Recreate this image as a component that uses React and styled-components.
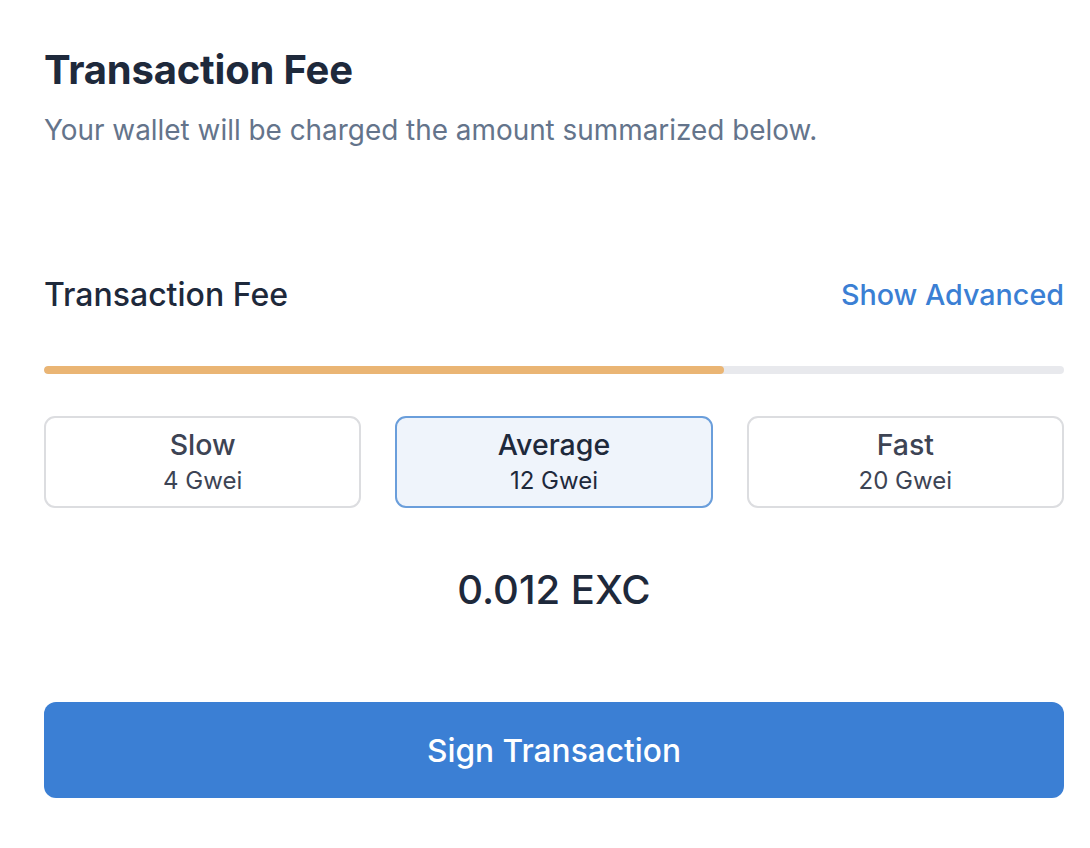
import React, { useState } from "react";
import styled, { createGlobalStyle } from "styled-components";

const Global = createGlobalStyle`
  html, body { margin: 0; padding: 0; background: #ffffff; }
  body { font-family: Inter, "Noto Sans", sans-serif; -webkit-font-smoothing: antialiased; }
  * { box-sizing: border-box; }
`;

const Page = styled.div`
  padding: 44px 26px 44px 44px;
  display: flex;
  flex-direction: column;
`;

const Title = styled.h1`
  margin: 0;
  font-size: 40px;
  line-height: 52px;
  font-weight: 700;
  color: #1e293b;
  letter-spacing: -0.2px;
`;

const Subtitle = styled.p`
  margin: 15px 0 0;
  font-size: 27.9px;
  line-height: 38px;
  color: #64748b;
`;

const FeeHeader = styled.div`
  margin-top: 126px;
  height: 40px;
  display: flex;
  justify-content: space-between;
  align-items: center;
`;

const Label = styled.span`
  font-size: 32px;
  line-height: 40px;
  font-weight: 500;
  color: #1e293b;
`;

const LinkButton = styled.button`
  border: none;
  background: none;
  padding: 0;
  font-family: inherit;
  font-size: 28.7px;
  line-height: 40px;
  font-weight: 500;
  color: #3b7fd4;
  cursor: pointer;
`;

const Track = styled.div`
  margin-top: 51px;
  height: 8px;
  border-radius: 4px;
  background: #e8e9ed;
  overflow: hidden;
`;

const Fill = styled.div`
  height: 100%;
  border-radius: 4px;
  background: #eab574;
`;

const Options = styled.div`
  margin-top: 42px;
  display: grid;
  grid-template-columns: repeat(3, 1fr);
  gap: 34px;
`;

const Option = styled.button`
  height: 92px;
  border-radius: 11px;
  border: 2px solid ${(p) => (p.$active ? "#6a9edb" : "#dcdde0")};
  background: ${(p) => (p.$active ? "#eff4fb" : "#ffffff")};
  display: flex;
  flex-direction: column;
  align-items: center;
  justify-content: center;
  gap: 2px;
  font-family: inherit;
  cursor: pointer;
  padding: 0;
`;

const OptionName = styled.span`
  font-size: 28.5px;
  line-height: 36px;
  font-weight: 500;
  color: ${(p) => (p.$active ? "#1e293b" : "#3d4454")};
`;

const OptionPrice = styled.span`
  font-size: 24px;
  line-height: 32px;
  color: ${(p) => (p.$active ? "#1e293b" : "#3d4454")};
`;

const Amount = styled.div`
  margin-top: 56px;
  text-align: center;
  font-size: 40px;
  line-height: 52px;
  font-weight: 500;
  color: #1e293b;
`;

const Primary = styled.button`
  margin-top: 86px;
  height: 96px;
  border: none;
  border-radius: 12px;
  background: #3b7fd4;
  color: #ffffff;
  font-family: inherit;
  font-size: 31.7px;
  font-weight: 500;
  cursor: pointer;
`;

const speeds = [
  { name: "Slow", price: "4 Gwei" },
  { name: "Average", price: "12 Gwei" },
  { name: "Fast", price: "20 Gwei" },
];

export default function App() {
  const [sel, setSel] = useState(1);
  return (
    <>
      <Global />
      <Page>
        <Title>Transaction Fee</Title>
        <Subtitle>Your wallet will be charged the amount summarized below.</Subtitle>
        <FeeHeader>
          <Label>Transaction Fee</Label>
          <LinkButton>Show Advanced</LinkButton>
        </FeeHeader>
        <Track>
          <Fill style={{ width: `${((sel + 1) / 3) * 100}%` }} />
        </Track>
        <Options>
          {speeds.map((s, i) => (
            <Option key={s.name} $active={i === sel} onClick={() => setSel(i)}>
              <OptionName $active={i === sel}>{s.name}</OptionName>
              <OptionPrice $active={i === sel}>{s.price}</OptionPrice>
            </Option>
          ))}
        </Options>
        <Amount>0.012 EXC</Amount>
        <Primary>Sign Transaction</Primary>
      </Page>
    </>
  );
}
